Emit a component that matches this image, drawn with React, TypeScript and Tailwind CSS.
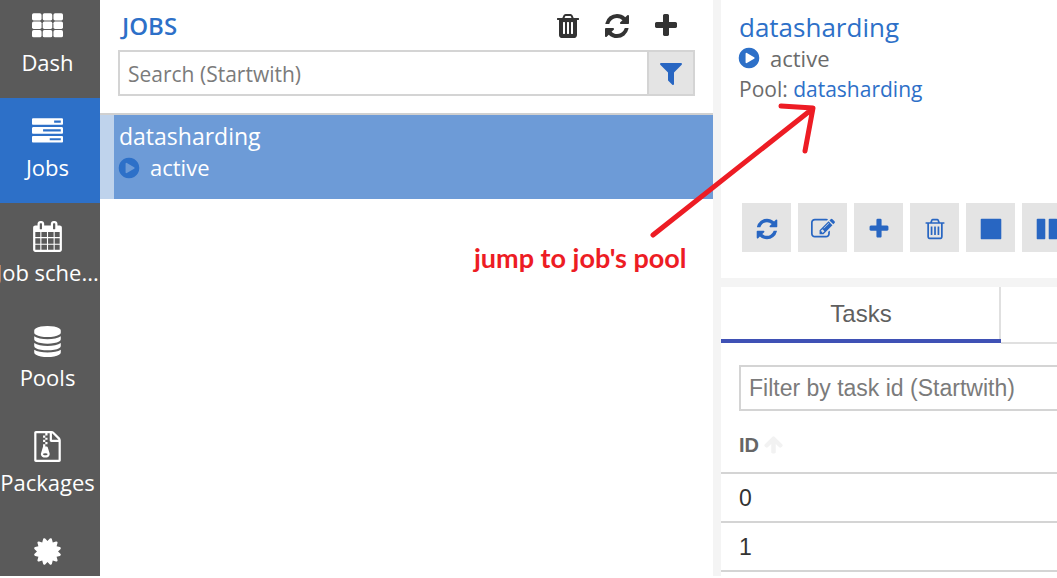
import type { ReactNode } from "react";

const FILLED = {
  tasks:
    "M1024 1408h640v-128h-640v128zm-384-512h1024v-128h-1024v128zm640-512h384v-128h-384v128zm512 832v256q0 26-19 45t-45 19h-1664q-26 0-45-19t-19-45v-256q0-26 19-45t45-19h1664q26 0 45 19t19 45zm0-512v256q0 26-19 45t-45 19h-1664q-26 0-45-19t-19-45v-256q0-26 19-45t45-19h1664q26 0 45 19t19 45zm0-512v256q0 26-19 45t-45 19h-1664q-26 0-45-19t-19-45v-256q0-26 19-45t45-19h1664q26 0 45 19t19 45z",
  calendar:
    "M192 1664h288v-288h-288v288zm352 0h320v-288h-320v288zm-352-352h288v-320h-288v320zm352 0h320v-320h-320v320zm-352-384h288v-288h-288v288zm736 736h320v-288h-320v288zm-384-736h320v-288h-320v288zm768 736h288v-288h-288v288zm-384-352h320v-320h-320v320zm-352-864v-288q0-13-9.5-22.5t-22.5-9.5h-64q-13 0-22.5 9.5t-9.5 22.5v288q0 13 9.5 22.5t22.5 9.5h64q13 0 22.5-9.5t9.5-22.5zm736 864h288v-320h-288v320zm-384-384h320v-288h-320v288zm384 0h288v-288h-288v288zm32-480v-288q0-13-9.5-22.5t-22.5-9.5h-64q-13 0-22.5 9.5t-9.5 22.5v288q0 13 9.5 22.5t22.5 9.5h64q13 0 22.5-9.5t9.5-22.5zm384-64v1280q0 52-38 90t-90 38h-1408q-52 0-90-38t-38-90v-1280q0-52 38-90t90-38h128v-96q0-66 47-113t113-47h64q66 0 113 47t47 113v96h384v-96q0-66 47-113t113-47h64q66 0 113 47t47 113v96h128q52 0 90 38t38 90z",
  database:
    "M896 768q237 0 443-43t325-127v170q0 69-103 128t-280 93.5-385 34.5-385-34.5-280-93.5-103-128v-170q119 84 325 127t443 43zm0 768q237 0 443-43t325-127v170q0 69-103 128t-280 93.5-385 34.5-385-34.5-280-93.5-103-128v-170q119 84 325 127t443 43zm0-384q237 0 443-43t325-127v170q0 69-103 128t-280 93.5-385 34.5-385-34.5-280-93.5-103-128v-170q119 84 325 127t443 43zm0-1152q208 0 385 34.5t280 93.5 103 128v128q0 69-103 128t-280 93.5-385 34.5-385-34.5-280-93.5-103-128v-128q0-69 103-128t280-93.5 385-34.5z",
  archive:
    "M768 384v-128h-128v128h128zm128 128v-128h-128v128h128zm-128 128v-128h-128v128h128zm128 128v-128h-128v128h128zm700-388q28 28 48 76t20 88v1152q0 40-28 68t-68 28h-1344q-40 0-68-28t-28-68v-1600q0-40 28-68t68-28h896q40 0 88 20t76 48zm-444-244v376h376q-10-29-22-41l-313-313q-12-12-41-22zm384 1528v-1024h-416q-40 0-68-28t-28-68v-416h-128v128h-128v-128h-512v1536h1280zm-627-721l107 349q8 27 8 52 0 83-72.5 137.5t-183.5 54.5-183.5-54.5-72.5-137.5q0-25 8-52 21-63 120-396v-128h128v128h79q22 0 39 13t23 34zm-141 465q53 0 90.5-19t37.5-45-37.5-45-90.5-19-90.5 19-37.5 45 37.5 45 90.5 19z",
  certificate:
    "M1504 896l138 135q30 28 20 70-12 41-52 51l-188 48 53 186q12 41-19 70-29 31-70 19l-186-53-48 188q-10 40-51 52-12 2-19 2-31 0-51-22l-135-138-135 138q-28 30-70 20-41-11-51-52l-48-188-186 53q-41 12-70-19-31-29-19-70l53-186-188-48q-40-10-52-51-10-42 20-70l138-135-138-135q-30-28-20-70 12-41 52-51l188-48-53-186q-12-41 19-70 29-31 70-19l186 53 48-188q10-41 51-51 41-12 70 19l135 139 135-139q29-30 70-19 41 10 51 51l48 188 186-53q41-12 70 19 31 29 19 70l-53 186 188 48q40 10 52 51 10 42-20 70z",
  refresh:
    "M1639 1056q0 5-1 7-64 268-268 434.5t-478 166.5q-146 0-282.5-55t-243.5-157l-129 129q-19 19-45 19t-45-19-19-45v-448q0-26 19-45t45-19h448q26 0 45 19t19 45-19 45l-137 137q71 66 161 102t187 36q134 0 250-65t186-179q11-17 53-117 8-23 30-23h192q13 0 22.5 9.5t9.5 22.5zm25-800v448q0 26-19 45t-45 19h-448q-26 0-45-19t-19-45 19-45l138-138q-148-137-349-137-134 0-250 65t-186 179q-11 17-53 117-8 23-30 23h-199q-13 0-22.5-9.5t-9.5-22.5v-7q65-268 270-434.5t480-166.5q146 0 284 55.5t245 156.5l130-129q19-19 45-19t45 19 19 45z",
  plus: "M1600 736v192q0 40-28 68t-68 28h-416v416q0 40-28 68t-68 28h-192q-40 0-68-28t-28-68v-416h-416q-40 0-68-28t-28-68v-192q0-40 28-68t68-28h416v-416q0-40 28-68t68-28h192q40 0 68 28t28 68v416h416q40 0 68 28t28 68z",
  filter:
    "M1595 295q17 41-14 70l-493 493v742q0 42-39 59-13 5-25 5-27 0-45-19l-256-256q-19-19-19-45v-486l-493-493q-31-29-14-70 17-39 59-39h1280q42 0 59 39z",
  play: "M896 128q209 0 385.5 103t279.5 279.5 103 385.5-103 385.5-279.5 279.5-385.5 103-385.5-103-279.5-279.5-103-385.5 103-385.5 279.5-279.5 385.5-103zm384 823q32-18 32-55t-32-55l-544-320q-31-19-64-1-32 19-32 56v640q0 37 32 56 16 8 32 8 17 0 32-9z",
  trash:
    "M704 1376v-704q0-14-9-23t-23-9h-64q-14 0-23 9t-9 23v704q0 14 9 23t23 9h64q14 0 23-9t9-23zm256 0v-704q0-14-9-23t-23-9h-64q-14 0-23 9t-9 23v704q0 14 9 23t23 9h64q14 0 23-9t9-23zm256 0v-704q0-14-9-23t-23-9h-64q-14 0-23 9t-9 23v704q0 14 9 23t23 9h64q14 0 23-9t9-23zm-544-992h448l-48-117q-7-9-17-11h-317q-10 2-17 11zm928 32v64q0 14-9 23t-23 9h-96v948q0 83-47 143.5t-113 60.5h-832q-66 0-113-58.5t-47-141.5v-952h-96q-14 0-23-9t-9-23v-64q0-14 9-23t23-9h309l70-167q15-37 54-63t79-26h320q40 0 79 26t54 63l70 167h309q14 0 23 9t9 23z",
  trashOutline:
    "M704 736v576q0 14-9 23t-23 9h-64q-14 0-23-9t-9-23v-576q0-14 9-23t23-9h64q14 0 23 9t9 23zm256 0v576q0 14-9 23t-23 9h-64q-14 0-23-9t-9-23v-576q0-14 9-23t23-9h64q14 0 23 9t9 23zm256 0v576q0 14-9 23t-23 9h-64q-14 0-23-9t-9-23v-576q0-14 9-23t23-9h64q14 0 23 9t9 23zm128 724v-948h-896v948q0 22 7 40.5t14.5 27 10.5 8.5h832q3 0 10.5-8.5t14.5-27 7-40.5zm-672-1076h448l-48-117q-7-9-17-11h-317q-10 2-17 11zm928 32v64q0 14-9 23t-23 9h-96v948q0 83-47 143.5t-113 60.5h-832q-66 0-113-58.5t-47-141.5v-952h-96q-14 0-23-9t-9-23v-64q0-14 9-23t23-9h309l70-167q15-37 54-63t79-26h320q40 0 79 26t54 63l70 167h309q14 0 23 9t9 23z",
  edit: "M888 1184l116-116-152-152-116 116v56h96v96h56zm440-720q-16-16-33 1l-350 350q-17 17-1 33t33-1l350-350q17-17 1-33zm80 594v190q0 119-84.5 203.5t-203.5 84.5h-832q-119 0-203.5-84.5t-84.5-203.5v-832q0-119 84.5-203.5t203.5-84.5h832q63 0 117 25 15 7 18 23 3 17-9 29l-49 49q-14 14-32 8-23-6-45-6h-832q-66 0-113 47t-47 113v832q0 66 47 113t113 47h832q66 0 113-47t47-113v-126q0-13 9-22l64-64q15-15 35-7t20 29zm-96-738l288 288-672 672h-288v-288zm444 132l-92 92-288-288 92-92q28-28 68-28t68 28l152 152q28 28 28 68t-28 68z",
  arrowUp:
    "M1675 971q0 51-37 90l-75 75q-38 38-91 38-54 0-90-38l-294-293v704q0 52-37.5 84.5t-90.5 32.5h-128q-53 0-90.5-32.5t-37.5-84.5v-704l-294 293q-36 38-90 38t-90-38l-75-75q-38-38-38-90 0-53 38-91l651-651q35-37 90-37 54 0 91 37l651 651q37 39 37 91z",
  stop: "M1664 192v1408q0 26-19 45t-45 19h-1408q-26 0-45-19t-19-45v-1408q0-26 19-45t45-19h1408q26 0 45 19t19 45z",
  pause:
    "M1664 192v1408q0 26-19 45t-45 19h-512q-26 0-45-19t-19-45v-1408q0-26 19-45t45-19h512q26 0 45 19t19 45zm-896 0v1408q0 26-19 45t-45 19h-512q-26 0-45-19t-19-45v-1408q0-26 19-45t45-19h512q26 0 45 19t19 45z",
};

type IconName = keyof typeof FILLED;

function Icon({ name, className }: { name: IconName; className: string }) {
  return (
    <svg viewBox="0 0 1792 1792" fill="currentColor" aria-hidden="true" className={className}>
      <path d={FILLED[name]} />
    </svg>
  );
}

function GridIcon() {
  return (
    <svg viewBox="0 0 1792 1792" fill="currentColor" aria-hidden="true" className="size-[31px] shrink-0">
      {[128, 614, 1100].flatMap((y) =>
        [0, 620, 1240].map((x) => <rect key={`${x}-${y}`} x={x} y={y} width="552" height="420" rx="96" />),
      )}
    </svg>
  );
}

function NavItem({ label, icon, active = false }: { label?: string; icon: ReactNode; active?: boolean }) {
  return (
    <a
      href="#"
      className={`flex h-[105px] shrink-0 flex-col items-center gap-1 pt-[18px] pr-[5px] text-[22px] leading-8 whitespace-nowrap text-white ${
        active ? "bg-[#2d70c8]" : ""
      }`}
    >
      {icon}
      {label && <span>{label}</span>}
    </a>
  );
}

const NAV_ICON = "size-[31px] shrink-0";

function HeaderButton({ name, label }: { name: IconName; label: string }) {
  return (
    <button type="button" aria-label={label} className="flex w-[49px] justify-center text-[#333333]">
      <Icon name={name} className="size-7" />
    </button>
  );
}

const ACTIONS: { name: IconName; label: string }[] = [
  { name: "refresh", label: "Refresh" },
  { name: "edit", label: "Edit" },
  { name: "plus", label: "Add" },
  { name: "trashOutline", label: "Delete" },
  { name: "stop", label: "Stop" },
  { name: "pause", label: "Pause" },
];

export default function App() {
  return (
    <div className="relative h-screen overflow-hidden bg-white pb-0.5 font-['Open_Sans','Noto_Sans',sans-serif]">
      <div className="grid h-full grid-cols-[100px_minmax(0,613fr)_minmax(0,344fr)]">
        <nav className="-mt-[7px] flex flex-col overflow-hidden bg-[#5a5a5a]">
          <NavItem label="Dash" icon={<GridIcon />} />
          <NavItem label="Jobs" active icon={<Icon name="tasks" className={NAV_ICON} />} />
          <NavItem label="Job sche..." icon={<Icon name="calendar" className={NAV_ICON} />} />
          <NavItem label="Pools" icon={<Icon name="database" className={NAV_ICON} />} />
          <NavItem label="Packages" icon={<Icon name="archive" className={NAV_ICON} />} />
          <NavItem icon={<Icon name="certificate" className={NAV_ICON} />} />
        </nav>

        <section>
          <div className="flex items-center justify-between pt-2.5 pr-[23px] pl-[22px]">
            <h1 className="text-[24px] leading-8 font-semibold text-[#2d70c8]">JOBS</h1>
            <div className="flex">
              <HeaderButton name="trash" label="Delete jobs" />
              <HeaderButton name="refresh" label="Refresh jobs" />
              <HeaderButton name="plus" label="Add job" />
            </div>
          </div>
          <div className="mx-[18px] mt-2 flex h-[46px] border-2 border-[#d4d4d4]">
            <input
              type="text"
              aria-label="Search jobs"
              placeholder="Search (Startwith)"
              className="min-w-0 flex-1 px-2 pt-1 text-[21px] text-[#333333] outline-none placeholder:text-[#7b7b7b]"
            />
            <button
              type="button"
              aria-label="Filter"
              className="flex w-[46px] items-center justify-center border-l-2 border-[#d4d4d4] bg-[#e4e4e4] text-[#2866c2]"
            >
              <Icon name="filter" className="size-7" />
            </button>
          </div>
          <ul className="mt-[17px] border-t-2 border-[#d0d0d0]">
            <li className="h-[84px] border-l-14 border-[#bfd3ec] bg-[#6d9bd7] pl-[5px] text-white">
              <div className="pt-[5px] text-[23px] leading-8">datasharding</div>
              <div className="flex items-center gap-[9px] text-[22px] leading-[31px]">
                <Icon name="play" className="-ml-0.5 size-6 text-[#2d70c8]" />
                active
              </div>
            </li>
          </ul>
        </section>

        <section className="flex flex-col overflow-hidden border-l-8 border-[#f4f4f4]">
          <div className="h-[278px] shrink-0 pt-[11px] pl-[18px] text-[#6b6b6b]">
            <h2 className="text-[26px] leading-8 text-[#2d70c8]">datasharding</h2>
            <div className="flex items-center gap-[9px] text-[22px] leading-[30px]">
              <Icon name="play" className="-ml-0.5 size-6 text-[#2d70c8]" />
              active
            </div>
            <div className="text-[21px] leading-8">
              Pool:{" "}
              <a href="#" className="text-[#2d70c8]">
                datasharding
              </a>
            </div>
            <div className="mt-[98px] flex gap-[7px] pl-[3px]">
              {ACTIONS.map(({ name, label }) => (
                <button
                  key={name}
                  type="button"
                  aria-label={label}
                  className="flex size-[49px] shrink-0 items-center justify-center bg-[#e4e4e4] pt-0.5 text-[#2866c2]"
                >
                  <Icon name={name} className="size-6" />
                </button>
              ))}
            </div>
          </div>

          <div className="flex flex-1 flex-col border-t-9 border-[#f4f4f4] font-['Liberation_Sans',Arial,sans-serif]">
            <div className="flex">
              <button
                type="button"
                className="h-14 w-[280px] shrink-0 border-b-4 border-b-[#3f51b5] pt-0.5 text-[24px] text-[#5f5f5f] shadow-[inset_-2px_0_0_#e0e0e0]"
              >
                Tasks
              </button>
              <div className="h-[57px] flex-1 border-b-2 border-[#e0e0e0]" />
            </div>
            <div className="mt-[21px] pl-[18px]">
              <input
                type="text"
                aria-label="Filter by task id"
                placeholder="Filter by task id (Startwith)"
                className="h-[46px] w-full border-2 border-r-0 border-[#d4d4d4] px-2 text-[23px] text-[#333333] outline-none placeholder:text-[#7b7b7b]"
              />
            </div>
            <table className="w-full border-collapse text-left text-[#333333]">
              <thead>
                <tr className="h-[62px] border-b-2 border-[#d4d4d4]">
                  <th scope="col" className="pt-1.5 pl-[18px] text-[20px] text-[#666666]">
                    <span className="flex items-center gap-1">
                      ID
                      <Icon name="arrowUp" className="size-[21px] text-[#f2f2f2]" />
                    </span>
                  </th>
                </tr>
              </thead>
              <tbody className="text-[23px]">
                {[0, 1].map((id) => (
                  <tr key={id} className="h-[49px] border-b-2 border-[#d4d4d4]">
                    <td className="pt-0.5 pl-[18px]">{id}</td>
                  </tr>
                ))}
              </tbody>
            </table>
          </div>
        </section>
      </div>

      <div className="pointer-events-none absolute top-[100px] left-[474px] text-[#ed1c24]">
        <svg viewBox="0 0 350 142" aria-hidden="true" className="h-[142px] w-[350px]">
          <path
            d="M179 135L337 10M307 6L339 8L331 51"
            fill="none"
            stroke="currentColor"
            strokeWidth="5"
            strokeLinecap="round"
            strokeLinejoin="round"
          />
        </svg>
        <p className="font-['Lato','Open_Sans',sans-serif] text-[27px] leading-8 font-bold">jump to job's pool</p>
      </div>
    </div>
  );
}
